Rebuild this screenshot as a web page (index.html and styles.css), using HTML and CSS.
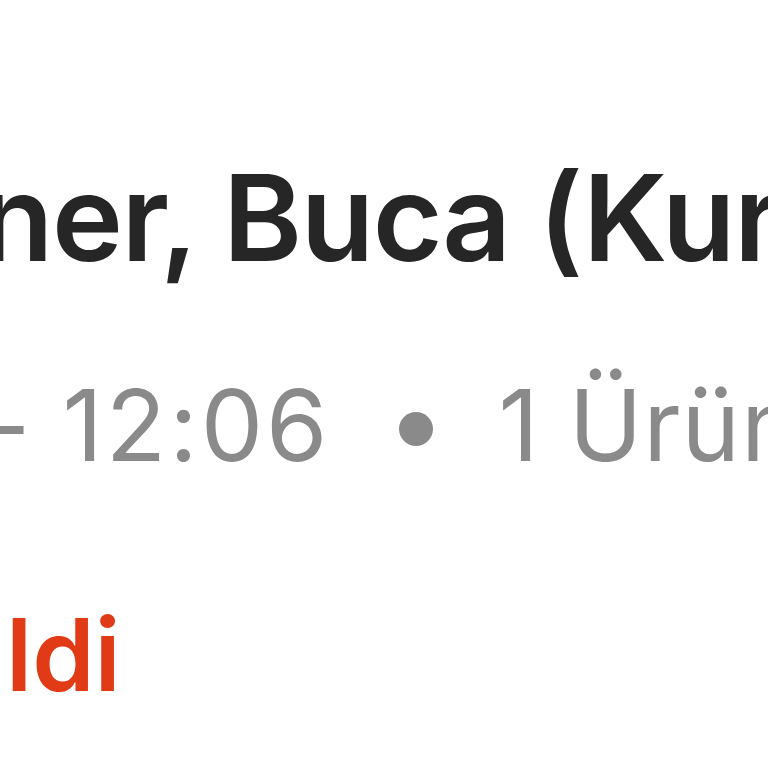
FILE: index.html
```html
<!DOCTYPE html>
<html lang="tr">
<head>
<meta charset="utf-8">
<link rel="stylesheet" href="styles.css">
</head>
<body>
<div class="card">
  <div class="title">ner, Buca (Kur</div>
  <div class="meta"><span class="dash">–</span><span class="time">12:06</span><span class="dot"></span><span class="count">1 Ürün</span></div>
  <div class="status">ldi</div>
</div>
</body>
</html>
```
FILE: styles.css
```css
html, body {
  margin: 0;
  padding: 0;
  background: #ffffff;
  width: 768px;
  height: 768px;
  overflow: hidden;
}
.card {
  font-family: Inter, "Liberation Sans", sans-serif;
  white-space: nowrap;
  padding-top: 158px;
  display: flex;
  flex-direction: column;
}
.title {
  font-size: 120px;
  line-height: 120px;
  font-weight: 600;
  color: #262626;
  margin-left: -20px;
  letter-spacing: -1.5px;
}
.meta {
  margin-top: 98px;
  font-size: 99px;
  line-height: 99px;
  font-weight: 400;
  color: #8a8a8a;
  margin-left: -26px;
  letter-spacing: 3px;
  display: flex;
  align-items: center;
}
.meta > span { flex-shrink: 0; }
.meta .dash { margin-right: 36px; }
.dot {
  display: block;
  width: 34px;
  height: 34px;
  border-radius: 50%;
  background: #8a8a8a;
  margin: 6px 66px 0 68px;
}
.count { letter-spacing: 1px; }
.status {
  margin-top: 130px;
  font-size: 100px;
  line-height: 100px;
  font-weight: 600;
  color: #e03a16;
  margin-left: 6px;
}
```
